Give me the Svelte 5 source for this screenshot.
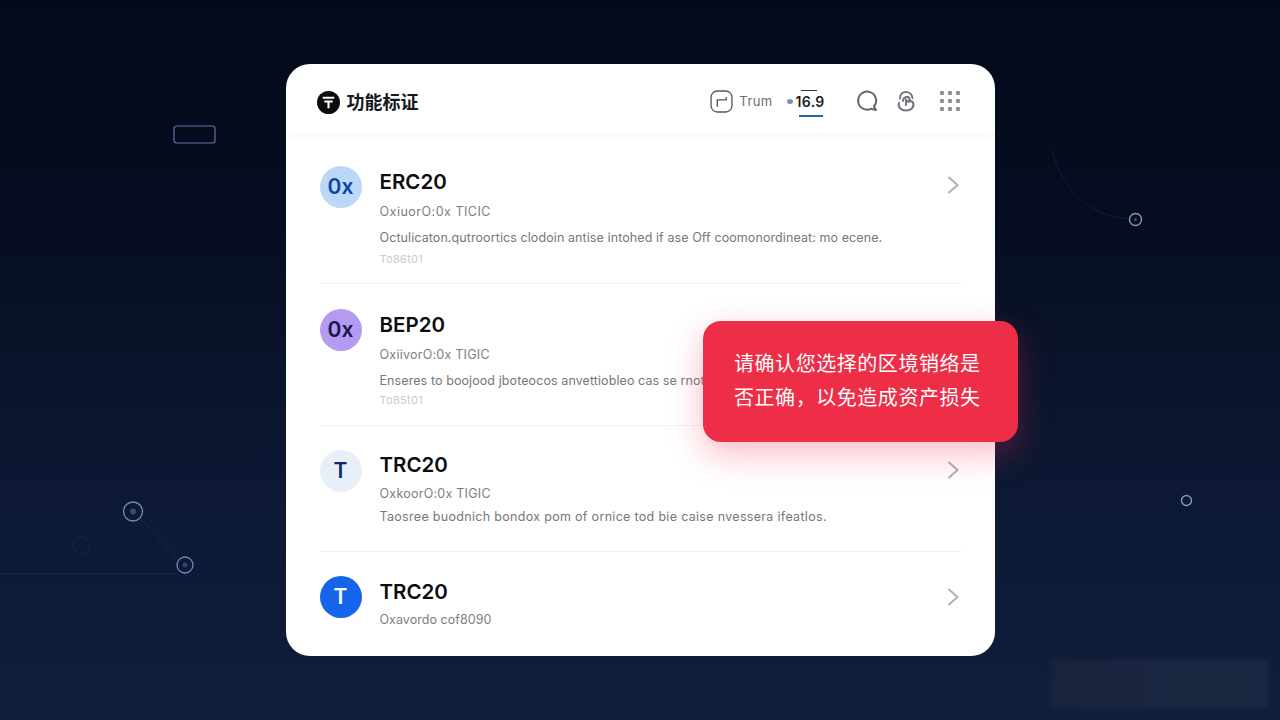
<script lang="ts">
  const rows = [
    {
      id: 'erc',
      name: 'ERC20',
      glyph: '0x',
      tone: 'blue',
      sub: 'OxiuorO:0x TICIC',
      desc: 'Octulicaton.qutroortics clodoin antise intohed if ase Off coomonordineat: mo ecene.',
      tag: 'To86t01',
      arrow: true
    },
    {
      id: 'bep',
      name: 'BEP20',
      glyph: '0x',
      tone: 'violet',
      sub: 'OxiivorO:0x TIGIC',
      desc: 'Enseres to boojood jboteocos anvettiobleo cas se rnoteotions',
      tag: 'To85t01',
      arrow: false
    },
    {
      id: 'trc',
      name: 'TRC20',
      glyph: 'T',
      tone: 'pale',
      sub: 'OxkoorO:0x TIGIC',
      desc: 'Taosree buodnich bondox pom of ornice tod bie caise nvessera ifeatlos.',
      tag: '',
      arrow: true
    },
    {
      id: 'trc2',
      name: 'TRC20',
      glyph: 'T',
      tone: 'solid',
      sub: 'Oxavordo cof8090',
      desc: '',
      tag: '',
      arrow: true
    }
  ];
</script>

<main class="stage">
  <!-- background decoration -->
  <svg class="backdrop" viewBox="0 0 1280 720" width="1280" height="720" aria-hidden="true">
    <rect x="174" y="126" width="41" height="17" rx="3" fill="none" stroke="#5f76a0" stroke-width="1.2" />
    <path d="M1052 150 C1062 190 1090 216 1128 219" fill="none" stroke="#121c33" stroke-width="1" />
    <circle cx="1135.500" cy="219.500" r="6" fill="none" stroke="#8199c2" stroke-width="1.4" />
    <circle cx="1135.500" cy="219.500" r="1.500" fill="#3a5478" />
    <circle cx="1186.500" cy="500.500" r="5" fill="none" stroke="#8199c2" stroke-width="1.4" />
    <path d="M0 574 H178" stroke="#1a2945" stroke-width="1" />
    <path d="M140 518 L178 558" stroke="#1a2945" stroke-width="1" />
    <circle cx="133" cy="511.500" r="9.500" fill="none" stroke="#6f8cb4" stroke-width="1.3" />
    <circle cx="133" cy="511.500" r="3" fill="#34506a" />
    <circle cx="185" cy="565" r="8" fill="none" stroke="#6f8cb4" stroke-width="1.3" />
    <circle cx="185" cy="565" r="2.500" fill="#2b4468" />
    <circle cx="81" cy="545" r="8" fill="none" stroke="#172540" stroke-width="1" />
  </svg>
  <div class="smudge"></div>

  <section class="card">
    <header class="top">
      <div class="brand">
        <svg class="logo" viewBox="0 0 22 22" width="23" height="23" aria-hidden="true">
          <circle cx="11" cy="11" r="11" fill="#0b0b0d" />
          <path d="M5.500 6.500H16.500M7 10H15M11 10V16.500" fill="none" stroke="#fff" stroke-width="2" />
        </svg>
        <h1>功能标证</h1>
      </div>
      <div class="tools">
        <div class="network">
          <svg viewBox="0 0 22 22" width="23" height="23" aria-hidden="true">
            <rect x="1" y="1" width="20" height="20" rx="6" fill="none" stroke="#55585e" stroke-width="1.300" />
            <path d="M7 16V9.500H15.500V7" fill="none" stroke="#55585e" stroke-width="1.300" />
          </svg>
          <span class="net-name">Trum</span>
        </div>
        <div class="version">
          <i class="dot"></i>
          <b>16.9</b>
        </div>
        <div class="icons">
          <svg viewBox="0 0 22 22" width="22" height="22" aria-hidden="true">
            <path d="M15 18.800A9 9 0 1 1 18 16.500L20 20 15 18.800Z" fill="none" stroke="#63666c" stroke-width="2" stroke-linejoin="round" />
          </svg>
          <svg viewBox="0 0 22 22" width="22" height="22" aria-hidden="true">
            <path d="M5 8.500C5 4 8 2 11 2C14 2 17 4 17.500 8M8 11C8 7 13 5.500 14.500 8.500C15.500 11 12 11.500 11 10V15M4 13C2.500 17 6 20.500 11 20.500C16 20.500 20 17 18 12.500C17 11 15 11 13.500 12" fill="none" stroke="#74777d" stroke-width="2" stroke-linecap="round" />
          </svg>
          <div class="grid-icon">
            {#each Array(9) as _}
              <i></i>
            {/each}
          </div>
        </div>
      </div>
    </header>

    <ul class="list">
      {#each rows as row (row.id)}
        <li class="row {row.id}">
          <span class="badge {row.tone}">{row.glyph}</span>
          <div class="body">
            <h2>{row.name}</h2>
            <p class="sub">{row.sub}</p>
            {#if row.desc}<p class="desc">{row.desc}</p>{/if}
            {#if row.tag}<p class="tag">{row.tag}</p>{/if}
          </div>
          {#if row.arrow}
            <svg class="chevron" viewBox="0 0 14 20" width="14" height="20" aria-hidden="true">
              <path d="M2.500 2L11.500 10L2.500 18" fill="none" stroke="#aeb1b6" stroke-width="2" />
            </svg>
          {/if}
        </li>
      {/each}
    </ul>
  </section>

  <aside class="toast">请确认您选择的区境销络是<br />否正确，以免造成资产损失</aside>
</main>

<style>
  :global(body) {
    background: #0b1429;
  }
  .stage {
    position: relative;
    width: 1280px;
    height: 720px;
    overflow: hidden;
    display: flex;
    align-items: center;
    justify-content: center;
    background: linear-gradient(180deg, #040a1b 0%, #060d20 30%, #0c1833 65%, #101e3c 100%);
    font-family: Inter, "Liberation Sans", "Noto Sans CJK SC", sans-serif;
  }
  .backdrop {
    position: absolute;
    inset: 0;
  }
  .smudge {
    position: absolute;
    left: 1050px;
    top: 659px;
    width: 218px;
    height: 50px;
    background: linear-gradient(90deg, #18233c 0%, #1b2540 40%, #1a2842 60%, #1a2843 100%);
    filter: blur(2px);
  }
  .card {
    position: relative;
    width: 709px;
    height: 592px;
    background: #fff;
    border-radius: 24px;
    overflow: hidden;
    display: flex;
    flex-direction: column;
  }
  .top {
    height: 69px;
    flex: none;
    box-sizing: border-box;
    padding: 7px 35px 0 31px;
    display: flex;
    align-items: center;
    justify-content: space-between;
    box-shadow: 0 2px 6px rgba(20, 30, 50, 0.05);
  }
  .brand {
    display: flex;
    align-items: center;
    gap: 7px;
  }
  .logo {
    display: block;
  }
  h1 {
    margin: -2px 0 0;
    font-size: 18px;
    font-weight: 700;
    color: #17181b;
    font-family: "Noto Sans CJK SC", sans-serif;
  }
  .tools {
    display: flex;
    align-items: center;
    margin-top: -2px;
  }
  .network {
    display: flex;
    align-items: center;
    gap: 6px;
  }
  .network svg {
    display: block;
  }
  .net-name {
    font-size: 13px;
    letter-spacing: 0.4px;
    color: #6b6e74;
  }
  .version {
    position: relative;
    display: flex;
    align-items: center;
    gap: 3px;
    height: 30px;
    margin-left: 14px;
    font-size: 14px;
    letter-spacing: 0.3px;
    color: #1a1c20;
  }
  .version b {
    font-weight: 600;
  }
  .version::before {
    content: '';
    position: absolute;
    top: 4px;
    left: 14px;
    width: 16px;
    height: 1px;
    background: #333;
  }
  .version::after {
    content: '';
    position: absolute;
    bottom: -1px;
    left: 12px;
    width: 24px;
    height: 2px;
    background: #2b62ad;
  }
  .dot {
    width: 6px;
    height: 5px;
    border-radius: 50%;
    background: #6d93c4;
  }
  .icons {
    display: flex;
    align-items: center;
    gap: 17px;
    margin-left: 31px;
  }
  .icons svg {
    display: block;
  }
  .grid-icon {
    display: grid;
    grid-template-columns: repeat(3, 4px);
    gap: 4px;
    margin-left: 6px;
  }
  .grid-icon i {
    width: 4px;
    height: 4px;
    border-radius: 1px;
    background: #8f9298;
  }
  .list {
    list-style: none;
    margin: 0;
    padding: 8px 34px 0;
    flex: 1;
  }
  .row {
    display: flex;
    align-items: flex-start;
    box-sizing: border-box;
    padding-top: 25px;
    height: 142px;
    border-bottom: 1px solid #eff0f3;
  }
  .erc {
    height: 143px;
  }
  .trc {
    height: 126px;
    padding-top: 24px;
  }
  .trc2 {
    height: auto;
    padding-top: 24px;
    border-bottom: 0;
  }
  .badge {
    flex: none;
    width: 42px;
    height: 42px;
    border-radius: 50%;
    display: flex;
    align-items: center;
    justify-content: center;
    padding-bottom: 1px;
    box-sizing: border-box;
    font-size: 21px;
    font-weight: 600;
  }
  .blue {
    background: #bcd8f8;
    color: #0f45a8;
  }
  .violet {
    background: #b49af0;
    color: #1a1550;
  }
  .pale {
    background: #e9eff8;
    color: #0f2a66;
  }
  .solid {
    background: #1565ec;
    color: #fff;
  }
  .body {
    flex: 1;
    min-width: 0;
    margin-left: 18px;
  }
  h2 {
    margin: 1px 0 0;
    font-size: 20.500px;
    line-height: 30px;
    font-weight: 600;
    color: #0c0d10;
  }
  .sub {
    margin: 7px 0 0;
    font-size: 12.500px;
    line-height: 16px;
    letter-spacing: 0.5px;
    color: #7b7e84;
  }
  .desc {
    margin: 10px 0 0;
    font-size: 12.500px;
    line-height: 16px;
    letter-spacing: 0.09px;
    color: #74777d;
    white-space: nowrap;
  }
  .tag {
    margin: 5px 0 0;
    font-size: 11px;
    line-height: 16px;
    letter-spacing: 0.3px;
    color: #c8cbd0;
  }
  .bep .tag {
    margin-top: 3px;
  }
  .bep .sub,
  .trc .sub {
    letter-spacing: 0.25px;
  }
  .trc h2 {
    margin-top: 0;
  }
  .trc .sub {
    margin-top: 6px;
  }
  .trc .desc {
    margin-top: 7px;
    letter-spacing: 0.31px;
  }
  .trc2 .sub {
    margin-top: 5px;
    letter-spacing: 0.05px;
  }
  .chevron {
    flex: none;
    margin-top: 9px;
    margin-right: 1px;
  }
  .trc .chevron {
    margin-top: 10px;
  }
  .trc2 .chevron {
    margin-top: 11px;
  }
  .toast {
    position: absolute;
    left: 703px;
    top: 321px;
    width: 315px;
    height: 121px;
    box-sizing: border-box;
    padding: 25px 0 0 31px;
    border-radius: 18px;
    background: #ee2d47;
    color: #fff;
    font-family: "Noto Sans CJK SC", sans-serif;
    font-size: 20px;
    line-height: 34px;
    letter-spacing: 0.55px;
    white-space: nowrap;
    box-shadow: 0 12px 34px rgba(238, 45, 71, 0.32);
  }
</style>
